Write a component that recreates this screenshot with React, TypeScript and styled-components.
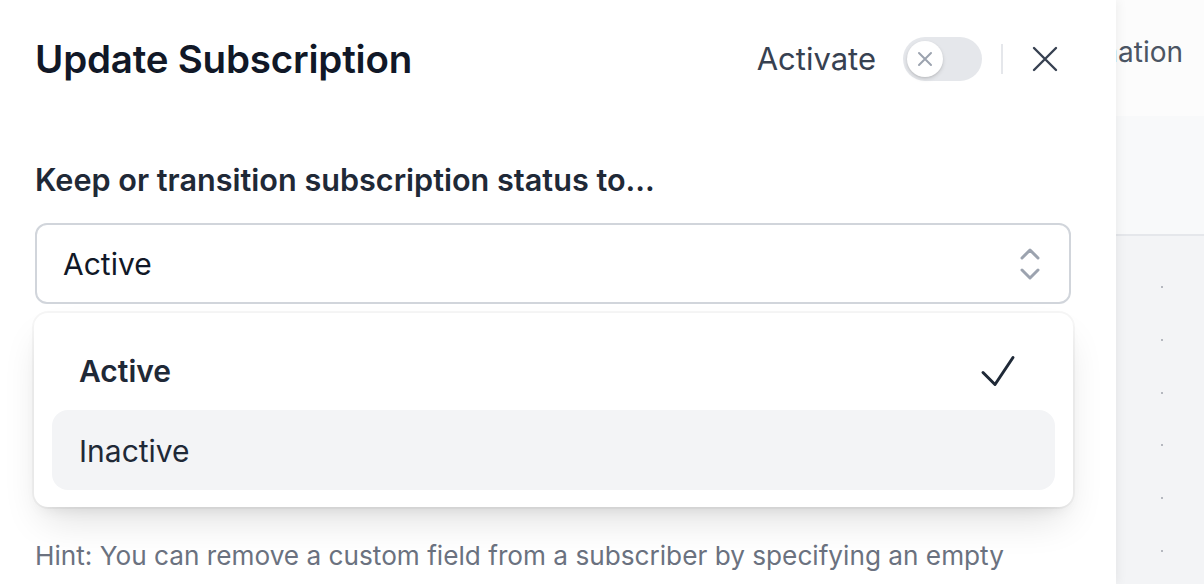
import React from "react";
import styled, { createGlobalStyle } from "styled-components";

const Global = createGlobalStyle`
  html, body { margin: 0; padding: 0; }
  body {
    width: 1204px;
    height: 584px;
    overflow: hidden;
    font-family: Inter, "Noto Sans", "Liberation Sans", sans-serif;
    -webkit-font-smoothing: antialiased;
  }
  #root { height: 584px; }
`;

const Page = styled.div`
  position: relative;
  width: 1204px;
  height: 584px;
  overflow: hidden;
  display: flex;
  flex-direction: column;
  background: #f3f4f6;
`;

const BgHeader = styled.div`
  height: 116px;
  flex: none;
  background: #fcfcfc;
  display: flex;
  justify-content: flex-end;
  align-items: flex-start;
  padding: 32px 21px 0 0;
  box-sizing: border-box;
  font-size: 28px;
  line-height: 40px;
  color: #4b5563;
`;

const BgToolbar = styled.div`
  height: 118px;
  flex: none;
  background: #f8f9fa;
  border-bottom: 2px solid #e5e7eb;
`;

const BgRows = styled.div`
  display: flex;
  flex-direction: column;
  padding-top: 50px;
`;

const BgRow = styled.div`
  height: 52.8px;
  display: flex;
  justify-content: flex-end;
  padding-right: 41px;
  align-items: flex-start;
`;

const Dot = styled.span`
  width: 2px;
  height: 2px;
  border-radius: 1px;
  background: #a1a5ad;
`;

const Panel = styled.aside`
  position: absolute;
  left: 0;
  top: 0;
  width: 1116px;
  height: 584px;
  background: #ffffff;
  box-shadow: 2px 0 10px rgba(0, 0, 0, 0.06);
  box-sizing: border-box;
  padding: 39px 45px 0 35px;
  display: flex;
  flex-direction: column;
`;

const Header = styled.div`
  display: flex;
  align-items: center;
  height: 40px;
`;

const Title = styled.h2`
  margin: 0;
  flex: 1;
  font-size: 38.5px;
  line-height: 40px;
  font-weight: 600;
  color: #111827;
  letter-spacing: -0.2px;
`;

const HeaderActions = styled.div`
  display: flex;
  align-items: center;
`;

const ActivateLabel = styled.span`
  font-size: 31px;
  line-height: 40px;
  color: #374151;
  margin-right: 27px;
`;

const Toggle = styled.div`
  width: 79px;
  height: 44px;
  border-radius: 22px;
  background: #e5e7eb;
  display: flex;
  align-items: center;
  padding: 0 4px;
  box-sizing: border-box;
`;

const Knob = styled.span`
  width: 36px;
  height: 36px;
  border-radius: 50%;
  background: #ffffff;
  box-shadow: 0 2px 4px rgba(0, 0, 0, 0.12), 0 1px 2px rgba(0, 0, 0, 0.08);
  display: flex;
  align-items: center;
  justify-content: center;
`;

const Divider = styled.span`
  width: 2px;
  height: 30px;
  background: #e5e7eb;
  margin: 0 18px 0 19px;
`;

const CloseButton = styled.button`
  width: 48px;
  height: 48px;
  border: 0;
  background: transparent;
  padding: 0;
  display: flex;
  align-items: center;
  justify-content: center;
  color: #374151;
  margin-right: 2px;
`;

const Field = styled.div`
  margin-top: 81px;
  display: flex;
  flex-direction: column;
`;

const Label = styled.label`
  font-size: 30.6px;
  line-height: 40px;
  font-weight: 600;
  color: #1f2937;
`;

const SelectWrap = styled.div`
  position: relative;
  margin-top: 23px;
`;

const SelectBox = styled.div`
  height: 81px;
  box-sizing: border-box;
  border: 2px solid #d1d5db;
  border-radius: 12px;
  background: #fff;
  display: flex;
  align-items: center;
  padding: 0 27px 0 26px;
  font-size: 30px;
  color: #111827;
`;

const SelectValue = styled.span`
  flex: 1;
  line-height: 40px;
`;

const Menu = styled.ul`
  position: absolute;
  top: 90px;
  left: -1px;
  right: -2px;
  margin: 0;
  list-style: none;
  padding: 17px 18px;
  background: #fff;
  border-radius: 14px;
  box-shadow: 0 0 0 2px rgba(0, 0, 0, 0.035), 0 20px 40px -10px rgba(0, 0, 0, 0.14),
    0 8px 16px -8px rgba(0, 0, 0, 0.1);
  z-index: 2;
`;

const Option = styled.li<{ $selected?: boolean; $active?: boolean }>`
  height: 80px;
  border-radius: 16px;
  display: flex;
  align-items: center;
  padding: 2px 33px 0 27px;
  box-sizing: border-box;
  font-size: 30px;
  line-height: 40px;
  color: #1f2937;
  font-weight: ${(p) => (p.$selected ? 600 : 400)};
  background: ${(p) => (p.$active ? "#f3f4f6" : "transparent")};
`;

const OptionText = styled.span`
  flex: 1;
`;

const Hint = styled.p`
  margin: 233px 0 0;
  font-size: 26.2px;
  line-height: 38px;
  color: #6b7280;
`;

const SmallX = () => (
  <svg width="16" height="16" viewBox="0 0 16 16" fill="none">
    <path d="M2 2 L14 14 M14 2 L2 14" stroke="#9ca3af" strokeWidth="2" strokeLinecap="round" />
  </svg>
);

const CloseIcon = () => (
  <svg width="28" height="28" viewBox="0 0 28 28" fill="none">
    <path d="M3 3 L25 25 M25 3 L3 25" stroke="currentColor" strokeWidth="2.4" strokeLinecap="round" />
  </svg>
);

const UpDown = () => (
  <svg width="24" height="36" viewBox="0 0 24 36" fill="none">
    <path
      d="M4 12 L12 4 L20 12 M4 24 L12 32 L20 24"
      stroke="#9ca3af"
      strokeWidth="3"
      strokeLinecap="round"
      strokeLinejoin="round"
    />
  </svg>
);

const CheckIcon = () => (
  <svg width="48" height="48" viewBox="0 0 24 24" fill="none">
    <path
      d="m4.5 12.75 6 6 9-13.5"
      stroke="#1f2937"
      strokeWidth="1.5"
      strokeLinecap="round"
      strokeLinejoin="round"
    />
  </svg>
);

export default function App() {
  const rows = [0, 1, 2, 3, 4, 5];
  return (
    <>
      <Global />
      <Page>
        <BgHeader>Automation</BgHeader>
        <BgToolbar />
        <BgRows>
          {rows.map((r) => (
            <BgRow key={r}>
              <Dot />
            </BgRow>
          ))}
        </BgRows>

        <Panel>
          <Header>
            <Title>Update Subscription</Title>
            <HeaderActions>
              <ActivateLabel>Activate</ActivateLabel>
              <Toggle>
                <Knob>
                  <SmallX />
                </Knob>
              </Toggle>
              <Divider />
              <CloseButton aria-label="Close">
                <CloseIcon />
              </CloseButton>
            </HeaderActions>
          </Header>

          <Field>
            <Label>Keep or transition subscription status to...</Label>
            <SelectWrap>
              <SelectBox>
                <SelectValue>Active</SelectValue>
                <UpDown />
              </SelectBox>
              <Menu>
                <Option $selected>
                  <OptionText>Active</OptionText>
                  <CheckIcon />
                </Option>
                <Option $active>
                  <OptionText>Inactive</OptionText>
                </Option>
              </Menu>
            </SelectWrap>
          </Field>

          <Hint>
            Hint: You can remove a custom field from a subscriber by specifying an empty value.
          </Hint>
        </Panel>
      </Page>
    </>
  );
}
